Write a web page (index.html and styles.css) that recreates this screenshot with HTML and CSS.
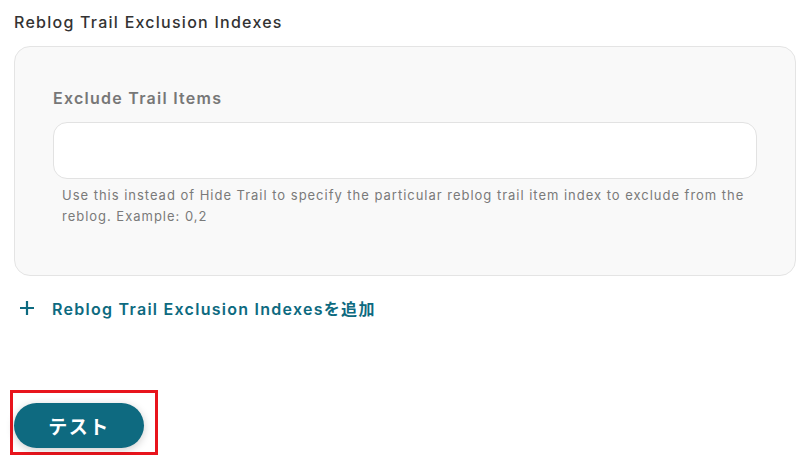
FILE: index.html
```html
<!DOCTYPE html>
<html lang="ja">
<head>
<meta charset="utf-8">
<link rel="stylesheet" href="styles.css">
</head>
<body>
<div class="page">
  <h2 class="section-title">Reblog Trail Exclusion Indexes</h2>
  <div class="card">
    <label class="field-label">Exclude Trail Items</label>
    <div class="input"></div>
    <p class="help">Use this instead of Hide Trail to specify the particular reblog trail item index to exclude from the reblog. Example: 0,2</p>
  </div>
  <div class="add-row">
    <svg class="plus" width="16" height="16" viewBox="0 0 16 16"><path d="M8 1v14M1 8h14" stroke="#0d6a80" stroke-width="2.2" fill="none"/></svg>
    <span class="add-text">Reblog Trail Exclusion Indexesを追加</span>
  </div>
  <div class="test-wrap">
    <button class="test-btn">テスト</button>
  </div>
</div>
</body>
</html>
```
FILE: styles.css
```css
* { box-sizing: border-box; }
html, body { margin: 0; padding: 0; background: #fff; }
body { font-family: Inter, "Noto Sans CJK JP", sans-serif; }
.page { padding: 0 16px 0 14px; }
.section-title {
  margin: 0;
  padding-top: 11px;
  font-size: 16px;
  font-weight: 500;
  color: #333;
  line-height: 22px;
  letter-spacing: 1.25px;
}
.card {
  margin-top: 13px;
  height: 230px;
  background: #f9f9f9;
  border: 1px solid #e4e4e4;
  border-radius: 16px;
  padding: 40px 38px 0 38px;
}
.field-label {
  display: block;
  font-size: 16px;
  font-weight: 600;
  color: #777;
  line-height: 22px;
  letter-spacing: 1.25px;
}
.input {
  margin-top: 13px;
  height: 57px;
  background: #fff;
  border: 1px solid #e2e2e2;
  border-radius: 14px;
}
.help {
  margin: 6px 0 0 9px;
  font-size: 13px;
  line-height: 21px;
  color: #7a7a7a;
  letter-spacing: 0.98px;
}
.add-row {
  display: flex;
  align-items: center;
  margin-top: 22px;
  padding-left: 5px;
  height: 20px;
}
.plus { display: block; }
.add-text {
  margin-left: 17px;
  font-size: 16px;
  font-weight: 600;
  color: #0d6a80;
  letter-spacing: 1.27px;
}
.test-wrap {
  margin-top: 72px;
  margin-left: -4px;
  width: 148px;
  height: 65px;
  border: 3px solid #e8141c;
  padding: 10px 0 0 1px;
}
.test-btn {
  width: 130px;
  height: 45px;
  border: none;
  border-radius: 23px;
  background: #0e6a80;
  color: #fff;
  font-family: "Noto Sans CJK JP", sans-serif;
  font-size: 19px;
  font-weight: 700;
  box-shadow: 0 2px 8px rgba(0,0,0,0.2);
  letter-spacing: 1.5px;
  padding: 0;
}
```
